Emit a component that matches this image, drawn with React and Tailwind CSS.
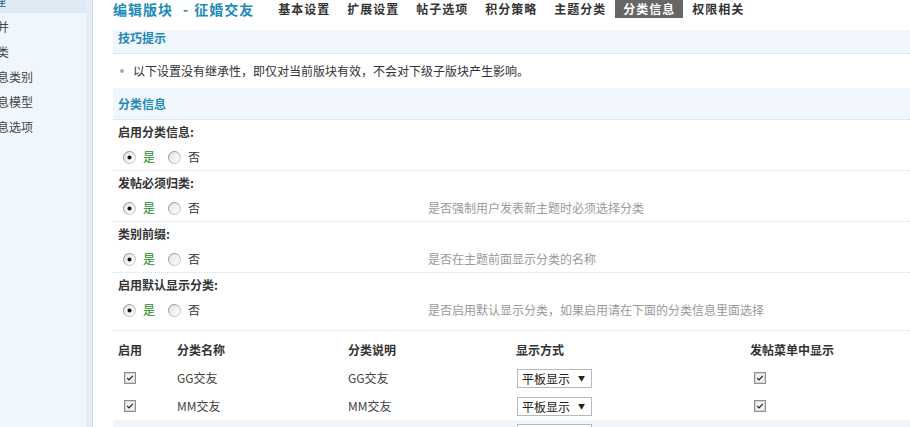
import React from "react";

const FONT = { fontFamily: '"Noto Sans CJK SC", "Noto Sans", sans-serif' };

function Radio({ checked }) {
  return (
    <svg width="13" height="13" viewBox="0 0 13 13" className="shrink-0">
      <defs>
        <linearGradient id={checked ? "rg1" : "rg2"} x1="0" y1="0" x2="1" y2="1">
          <stop offset="0" stopColor="#7f7f7f" />
          <stop offset="1" stopColor="#d8d8d8" />
        </linearGradient>
        <linearGradient id={checked ? "rf1" : "rf2"} x1="0" y1="0" x2="1" y2="1">
          <stop offset="0" stopColor="#e2e2e2" />
          <stop offset="1" stopColor="#ffffff" />
        </linearGradient>
      </defs>
      <circle cx="6.5" cy="6.5" r="6" fill={`url(#${checked ? "rf1" : "rf2"})`} stroke={`url(#${checked ? "rg1" : "rg2"})`} strokeWidth="1" />
      {checked && <circle cx="6.5" cy="6.5" r="2" fill="#111" />}
    </svg>
  );
}

function Check() {
  return (
    <svg width="12" height="12" viewBox="0 0 12 12" className="shrink-0">
      <rect x="0.5" y="0.5" width="11" height="11" fill="#f0f0f0" stroke="#8e8f8f" />
      <rect x="1.5" y="1.5" width="9" height="9" fill="none" stroke="#d6d6d6" />
      <path d="M3.2 6 L5 7.8 L8.8 3.8" fill="none" stroke="#222" strokeWidth="1.2" />
    </svg>
  );
}

function Select() {
  return (
    <div className="flex h-[19px] w-[75px] items-center justify-between border border-[#b5b9bd] bg-white pl-[4px] pr-[6px] text-[12px] leading-[17px] text-[#222]">
      <span>平板显示</span>
      <span className="text-[7px] leading-none">▼</span>
    </div>
  );
}

function SettingBlock({ label, desc, last }) {
  return (
    <div className="relative border-b border-dotted border-[#cfdde8]">
      <div className="flex h-[24px] items-center pl-[5px] text-[12px] font-bold text-[#333]">{label}</div>
      <div className={`flex h-[26px] items-center pl-[10px] text-[12px] ${last ? "mb-[7px]" : ""}`}>
        <Radio checked />
        <span className="ml-[7px] text-[#1a8a1a]">是</span>
        <span className="ml-[13px]"><Radio /></span>
        <span className="ml-[7px] text-[#333]">否</span>
        {desc && <span className="absolute left-[315px] text-[#999]">{desc}</span>}
      </div>
    </div>
  );
}

export default function App() {
  const side = [
    { t: "版块管理", sel: true },
    { t: "版块合并" },
    { t: "主题分类" },
    { t: "分类信息类别" },
    { t: "分类信息模型" },
    { t: "分类信息选项" },
  ];
  const tabs = ["基本设置", "扩展设置", "帖子选项", "积分策略", "主题分类", "分类信息", "权限相关"];
  return (
    <div style={FONT} className="relative flex h-[427px] w-[910px] overflow-hidden bg-white text-[12px] text-[#333]">
      {/* sidebar */}
      <div className="flex h-full w-[93px] shrink-0">
        <div className="h-full w-[86px] overflow-hidden bg-[#f0f7fc]">
          <div className="mt-[-11px]">
            {side.map((s, i) => (
              <div key={i} className={`flex items-center overflow-hidden whitespace-nowrap ${s.sel ? "mb-[1px] h-[24px] bg-[#deebf6]" : "h-[25px]"}`}>
                <span className={`${s.sel ? "ml-[-42px] text-[#1f5f8f]" : "ml-[-39px] text-[#444]"}`}>{s.t}</span>
              </div>
            ))}
          </div>
        </div>
        <div className="h-full w-[6px] bg-[#e4eef7]" />
        <div className="h-full w-[1px] bg-[#cbdcea]" />
      </div>

      {/* content */}
      <div className="ml-[20px] flex-1 overflow-hidden">
        <div className="flex h-[30px] items-start">
          <div className="flex whitespace-nowrap text-[14px] font-bold leading-[18px] tracking-[1px] text-[#1b8ab9]">
            <span>编辑版块</span>
            <span className="ml-[10px] mr-[5px]">-</span>
            <span>征婚交友</span>
          </div>
          <div className="ml-[16px] flex gap-[1px]">
            {tabs.map((t) => (
              <div
                key={t}
                className={`h-[18px] whitespace-nowrap px-[8px] text-[12px] font-bold leading-[18px] tracking-[1px] ${t === "分类信息" ? "bg-[#666] text-white" : "text-[#333]"}`}
              >
                {t}
              </div>
            ))}
          </div>
        </div>

        <div className="h-[24px] border-b border-dotted border-[#c8d9e6] bg-[#f0f6fc] pl-[5px] text-[12px] font-bold leading-[16px] text-[#1b8ab9]">技巧提示</div>
        <div className="flex h-[34px] items-center pl-[7px] text-[12px] text-[#333]">
          <span className="mr-[9px] inline-block h-[4px] w-[4px] rounded-full bg-[#aaa]" />
          以下设置没有继承性，即仅对当前版块有效，不会对下级子版块产生影响。
        </div>

        <div className="flex h-[32px] items-center border-b border-dotted border-[#c8d9e6] bg-[#f0f6fc] pl-[5px] text-[12px] font-bold text-[#1b8ab9]">分类信息</div>

        <SettingBlock label="启用分类信息:" />
        <SettingBlock label="发帖必须归类:" desc="是否强制用户发表新主题时必须选择分类" />
        <SettingBlock label="类别前缀:" desc="是否在主题前面显示分类的名称" />
        <SettingBlock label="启用默认显示分类:" desc="是否启用默认显示分类，如果启用请在下面的分类信息里面选择" last />

        <div className="grid h-[33px] grid-cols-[64px_171px_168px_234px_1fr] pt-[11px] text-[12px] font-bold leading-[16px] text-[#333]">
          <div className="pl-[5px]">启用</div>
          <div>分类名称</div>
          <div>分类说明</div>
          <div>显示方式</div>
          <div>发帖菜单中显示</div>
        </div>
        {["GG交友", "MM交友"].map((n) => (
          <div key={n} className="grid h-[28px] grid-cols-[64px_171px_168px_234px_1fr] items-center text-[12px] text-[#444]">
            <div className="pl-[11px]"><Check /></div>
            <div>{n}</div>
            <div>{n}</div>
            <div className="pl-[1px]"><Select /></div>
            <div className="pl-[4px]"><Check /></div>
          </div>
        ))}
        <div className="grid h-[28px] grid-cols-[64px_171px_168px_234px_1fr] items-start bg-[#eef6fb] pt-[4px] text-[12px]">
          <div />
          <div />
          <div />
          <div className="pl-[1px]"><Select /></div>
          <div />
        </div>
      </div>
    </div>
  );
}
